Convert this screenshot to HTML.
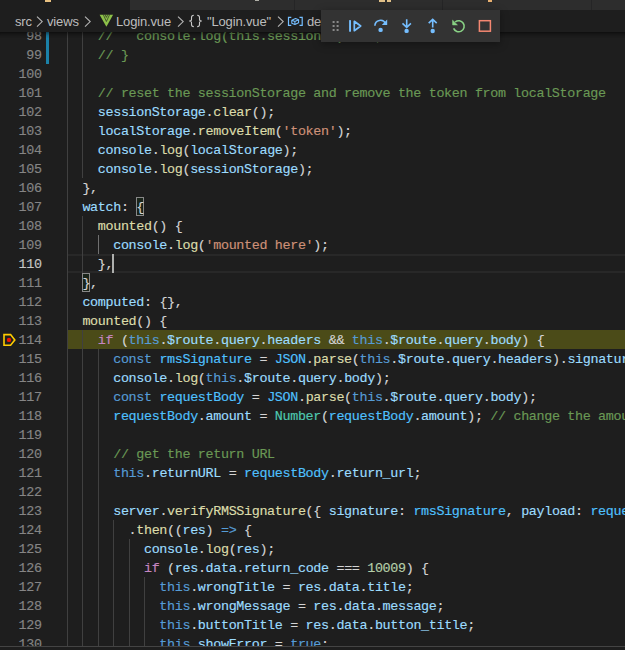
<!DOCTYPE html>
<html><head><meta charset="utf-8">
<style>
html,body{margin:0;padding:0;width:625px;height:650px;overflow:hidden;background:#1e1e1e}
*{box-sizing:border-box}
.a{position:absolute}
#tabs{position:absolute;left:0;top:0;width:625px;height:10px;background:#252526}
.tab{position:absolute;top:0;height:10px;background:#2d2d2d}
#crumbs{position:absolute;left:0;top:10px;width:625px;height:22px;background:#1e1e1e;font-family:"Liberation Sans",sans-serif;font-size:13px;color:#bdbdbd;line-height:22px;letter-spacing:-0.15px}
#crumbs .bt{position:absolute;top:1px;white-space:pre}
#ed{position:absolute;left:0;top:32px;width:625px;height:614px;overflow:hidden}
#in{position:absolute;left:0;top:-32px;width:625px;height:700px}
.row{position:absolute;left:67px;height:19px;line-height:19px;font-family:"Liberation Mono",monospace;font-size:13.4px;letter-spacing:-0.34px;white-space:pre;color:#d4d4d4;padding-top:1px;-webkit-text-stroke:0.15px currentColor}
.ln{position:absolute;left:0;width:41.7px;text-align:right;height:19px;line-height:19px;font-family:"Liberation Mono",monospace;font-size:13.4px;letter-spacing:-0.34px;white-space:pre;color:#858585;padding-top:1px;-webkit-text-stroke:0.15px currentColor}
.ln.act{color:#c6c6c6}
.g{position:absolute;width:1px;background:#404040}
.c{color:#6a9955}.v{color:#9cdcfe}.f{color:#dcdcaa}.s{color:#ce9178}.k{color:#c586c0}.b{color:#569cd6}.n{color:#b5cea8}.t{color:#4ec9b0}.o{color:#4fc1ff}
#shadow{position:absolute;left:0;top:32px;width:625px;height:6px;box-shadow:inset 0 6px 6px -6px #000}
#bottom{position:absolute;left:0;top:646px;width:625px;height:1px;background:#444}
#dbg{position:absolute;left:321px;top:10px;width:179px;height:32px;background:#333333;box-shadow:0 2px 8px rgba(0,0,0,.36)}
</style></head><body>
<div id="tabs">
  <div class="tab" style="left:0;width:130px;background:#1e1e1e"></div>
  <div class="tab" style="left:130px;width:164px"></div>
  <div class="tab" style="left:295px;width:147px"></div>
  <div class="tab" style="left:443px;width:148px"></div>
  <div class="tab" style="left:592px;width:33px"></div>
  <div class="a" style="left:45px;top:0;width:6px;height:1.5px;background:#e8c080"></div>
  <div class="a" style="left:255px;top:0;width:4px;height:1.2px;background:#b0b0a8"></div>
  <div class="a" style="left:379px;top:0;width:6px;height:1.5px;background:#e0c088"></div>
  <div class="a" style="left:387px;top:0;width:4px;height:1.5px;background:#e0c088"></div>
  <div class="a" style="left:488px;top:0;width:3.5px;height:1.5px;background:#e8b070"></div>
</div>
<div id="crumbs">
  <span class="bt" style="left:15px">src</span>
  <svg class="a" style="left:36px;top:6px" width="8" height="11" viewBox="0 0 8 11"><path d="M1 0.6 L6.2 5.6 L1 10.6" fill="none" stroke="#b4b4b4" stroke-width="1.1"/></svg>
  <span class="bt" style="left:47px">views</span>
  <svg class="a" style="left:84px;top:6px" width="8" height="11" viewBox="0 0 8 11"><path d="M1 0.6 L6.2 5.6 L1 10.6" fill="none" stroke="#b4b4b4" stroke-width="1.1"/></svg>
  <svg class="a" style="left:95px;top:2px" width="22" height="18" viewBox="0 0 22 18"><path d="M4.6 2.8 H18.1 L11.4 14.8 Z" fill="#8dc149"/><path d="M8.3 2.6 L11.4 9.5 L14.6 2.6 M10.1 2.6 L11.4 5.4 L12.7 2.6" fill="none" stroke="#1e1e1e" stroke-opacity="0.8" stroke-width="0.8"/></svg>
  <span class="bt" style="left:116px">Login.vue</span>
  <svg class="a" style="left:177px;top:6px" width="8" height="11" viewBox="0 0 8 11"><path d="M1 0.6 L6.2 5.6 L1 10.6" fill="none" stroke="#b4b4b4" stroke-width="1.1"/></svg>
  <svg class="a" style="left:186px;top:2px" width="20" height="18" viewBox="0 0 20 18"><path d="M7.8 3.3 C6 3.3 5.5 4 5.5 5.5 V7.5 C5.5 8.5 4.7 9 3.2 9 C4.7 9 5.5 9.5 5.5 10.5 V12.5 C5.5 14 6 14.6 7.8 14.6 M11.2 3.3 C13 3.3 13.5 4 13.5 5.5 V7.5 C13.5 8.5 14.3 9 15.8 9 C14.3 9 13.5 9.5 13.5 10.5 V12.5 C13.5 14 13 14.6 11.2 14.6" fill="none" stroke="#c8c8c8" stroke-width="1.1"/></svg>
  <span class="bt" style="left:207px">"Login.vue"</span>
  <svg class="a" style="left:277px;top:6px" width="8" height="11" viewBox="0 0 8 11"><path d="M1 0.6 L6.2 5.6 L1 10.6" fill="none" stroke="#b4b4b4" stroke-width="1.1"/></svg>
  <svg class="a" style="left:285px;top:2px" width="20" height="18" viewBox="0 0 20 18"><path d="M6.3 5.3 H3.5 V13.3 H6.3 M14.5 5.3 H17.2 V13.3 H14.5" fill="none" stroke="#75beff" stroke-width="1.2"/><path d="M6.8 8.2 L10.5 6.5 L13.6 7.8 V10.8 L9.9 12.5 L6.8 11.2 Z M6.8 8.2 L9.9 9.5 L13.6 7.8 M9.9 9.5 V12.5" fill="none" stroke="#75beff" stroke-width="1.1" stroke-linejoin="round"/></svg>
  <span class="bt" style="left:307px">de</span>
</div>
<div id="ed"><div id="in">
  <!-- stack frame highlight -->
  <div class="a" style="left:67px;top:330px;width:558px;height:19px;background:rgba(255,255,0,0.2)"></div>
  <!-- current line -->
  <div class="a" style="left:67px;top:254px;width:558px;height:19px;border-top:2px solid #282828;border-bottom:2px solid #282828"></div>
<div class="g" style="left:67px;top:26px;height:627px"></div>
<div class="g" style="left:82px;top:26px;height:152px"></div>
<div class="g" style="left:82px;top:216px;height:57px"></div>
<div class="g" style="left:82px;top:330px;height:323px"></div>
<div class="g" style="left:98px;top:235px;height:19px"></div>
<div class="g" style="left:98px;top:349px;height:304px"></div>
<div class="g" style="left:113px;top:520px;height:133px"></div>
<div class="g" style="left:129px;top:539px;height:114px"></div>
<div class="g" style="left:144px;top:577px;height:76px"></div>
  <div class="g" style="left:98px;top:235px;height:19px;background:#707070"></div>
  <!-- bracket match -->
  <div class="a" style="left:136px;top:197px;width:8px;height:19px;border:1px solid #888;background:rgba(0,100,0,0.1)"></div>
  <div class="a" style="left:82px;top:273px;width:8px;height:19px;border:1px solid #888;background:rgba(0,100,0,0.1)"></div>
<div class="ln" style="top:26px">98</div>
<div class="ln" style="top:45px">99</div>
<div class="ln" style="top:64px">100</div>
<div class="ln" style="top:83px">101</div>
<div class="ln" style="top:102px">102</div>
<div class="ln" style="top:121px">103</div>
<div class="ln" style="top:140px">104</div>
<div class="ln" style="top:159px">105</div>
<div class="ln" style="top:178px">106</div>
<div class="ln" style="top:197px">107</div>
<div class="ln" style="top:216px">108</div>
<div class="ln" style="top:235px">109</div>
<div class="ln act" style="top:254px">110</div>
<div class="ln" style="top:273px">111</div>
<div class="ln" style="top:292px">112</div>
<div class="ln" style="top:311px">113</div>
<div class="ln" style="top:330px">114</div>
<div class="ln" style="top:349px">115</div>
<div class="ln" style="top:368px">116</div>
<div class="ln" style="top:387px">117</div>
<div class="ln" style="top:406px">118</div>
<div class="ln" style="top:425px">119</div>
<div class="ln" style="top:444px">120</div>
<div class="ln" style="top:463px">121</div>
<div class="ln" style="top:482px">122</div>
<div class="ln" style="top:501px">123</div>
<div class="ln" style="top:520px">124</div>
<div class="ln" style="top:539px">125</div>
<div class="ln" style="top:558px">126</div>
<div class="ln" style="top:577px">127</div>
<div class="ln" style="top:596px">128</div>
<div class="ln" style="top:615px">129</div>
<div class="ln" style="top:634px">130</div>
<div class="row" style="top:26px">    <span class="c">//   console.log(this.sessionId)    ;</span></div>
<div class="row" style="top:45px">    <span class="c">// }</span></div>
<div class="row" style="top:64px"></div>
<div class="row" style="top:83px">    <span class="c">// reset the sessionStorage and remove the token from localStorage</span></div>
<div class="row" style="top:102px">    <span class="v">sessionStorage</span>.<span class="f">clear</span>();</div>
<div class="row" style="top:121px">    <span class="v">localStorage</span>.<span class="f">removeItem</span>(<span class="s">&#x27;token&#x27;</span>);</div>
<div class="row" style="top:140px">    <span class="v">console</span>.<span class="f">log</span>(<span class="v">localStorage</span>);</div>
<div class="row" style="top:159px">    <span class="v">console</span>.<span class="f">log</span>(<span class="v">sessionStorage</span>);</div>
<div class="row" style="top:178px">  },</div>
<div class="row" style="top:197px">  <span class="v">watch</span>: {</div>
<div class="row" style="top:216px">    <span class="f">mounted</span>() {</div>
<div class="row" style="top:235px">      <span class="v">console</span>.<span class="f">log</span>(<span class="s">&#x27;mounted here&#x27;</span>);</div>
<div class="row" style="top:254px">    },</div>
<div class="row" style="top:273px">  },</div>
<div class="row" style="top:292px">  <span class="v">computed</span>: {},</div>
<div class="row" style="top:311px">  <span class="f">mounted</span>() {</div>
<div class="row" style="top:330px">    <span class="k">if</span> (<span class="b">this</span>.<span class="v">$route</span>.<span class="v">query</span>.<span class="v">headers</span> &amp;&amp; <span class="b">this</span>.<span class="v">$route</span>.<span class="v">query</span>.<span class="v">body</span>) {</div>
<div class="row" style="top:349px">      <span class="b">const</span> <span class="o">rmsSignature</span> = <span class="o">JSON</span>.<span class="f">parse</span>(<span class="b">this</span>.<span class="v">$route</span>.<span class="v">query</span>.<span class="v">headers</span>).<span class="v">signature</span>;</div>
<div class="row" style="top:368px">      <span class="v">console</span>.<span class="f">log</span>(<span class="b">this</span>.<span class="v">$route</span>.<span class="v">query</span>.<span class="v">body</span>);</div>
<div class="row" style="top:387px">      <span class="b">const</span> <span class="o">requestBody</span> = <span class="o">JSON</span>.<span class="f">parse</span>(<span class="b">this</span>.<span class="v">$route</span>.<span class="v">query</span>.<span class="v">body</span>);</div>
<div class="row" style="top:406px">      <span class="o">requestBody</span>.<span class="v">amount</span> = <span class="t">Number</span>(<span class="o">requestBody</span>.<span class="v">amount</span>); <span class="c">// change the amount</span></div>
<div class="row" style="top:425px"></div>
<div class="row" style="top:444px">      <span class="c">// get the return URL</span></div>
<div class="row" style="top:463px">      <span class="b">this</span>.<span class="v">returnURL</span> = <span class="o">requestBody</span>.<span class="v">return_url</span>;</div>
<div class="row" style="top:482px"></div>
<div class="row" style="top:501px">      <span class="v">server</span>.<span class="f">verifyRMSSignature</span>({ <span class="v">signature</span>: <span class="o">rmsSignature</span>, <span class="v">payload</span>: <span class="o">requestBody</span> })</div>
<div class="row" style="top:520px">        .<span class="f">then</span>((<span class="v">res</span>) <span class="b">=&gt;</span> {</div>
<div class="row" style="top:539px">          <span class="v">console</span>.<span class="f">log</span>(<span class="v">res</span>);</div>
<div class="row" style="top:558px">          <span class="k">if</span> (<span class="v">res</span>.<span class="v">data</span>.<span class="v">return_code</span> === <span class="n">10009</span>) {</div>
<div class="row" style="top:577px">            <span class="b">this</span>.<span class="v">wrongTitle</span> = <span class="v">res</span>.<span class="v">data</span>.<span class="v">title</span>;</div>
<div class="row" style="top:596px">            <span class="b">this</span>.<span class="v">wrongMessage</span> = <span class="v">res</span>.<span class="v">data</span>.<span class="v">message</span>;</div>
<div class="row" style="top:615px">            <span class="b">this</span>.<span class="v">buttonTitle</span> = <span class="v">res</span>.<span class="v">data</span>.<span class="v">button_title</span>;</div>
<div class="row" style="top:634px">            <span class="b">this</span>.<span class="v">showError</span> = <span class="b">true</span>;</div>
  <!-- cursor -->
  <div class="a" style="left:112px;top:254px;width:2px;height:19px;background:#aeafad"></div>
  <!-- git bar -->
  <div class="a" style="left:46px;top:26px;width:3px;height:38px;background:#1b81a8"></div>
  <!-- breakpoint stack frame icon -->
  <svg class="a" style="left:0;top:330px" width="20" height="20" viewBox="0 0 20 20"><path d="M4 4.6 H10.6 L14.8 9.9 L10.6 15.2 H4 Z" fill="none" stroke="#ffcc00" stroke-width="1.6"/><circle cx="9" cy="9.9" r="2.2" fill="#f01400"/></svg>
</div></div>
<div id="shadow"></div>
<div id="bottom"></div>
<div id="dbg"><svg class="a" style="left:0;top:0" width="179" height="32" viewBox="0 0 179 32">
  <g fill="#8a8a8a"><rect x="11.6" y="11" width="2" height="2"/><rect x="15.6" y="11" width="2" height="2"/><rect x="11.6" y="15" width="2" height="2"/><rect x="15.6" y="15" width="2" height="2"/><rect x="11.6" y="19" width="2" height="2"/><rect x="15.6" y="19" width="2" height="2"/></g>
  <g transform="translate(23,6)"><rect x="5.1" y="4" width="1.9" height="11.8" rx="0.6" fill="#75beff"/><path d="M10.3 5.3 L16.7 10 L10.3 14.7 Z" fill="none" stroke="#75beff" stroke-width="1.7" stroke-linejoin="round"/></g>
  <g transform="translate(49,6)"><path d="M4.9 9.8 A5.6 5.6 0 0 1 15.6 7.6" fill="none" stroke="#75beff" stroke-width="1.6"/><path d="M17.2 3.6 L17.2 9.0 L11.8 9.0 Z" fill="#75beff"/><circle cx="10.6" cy="13.9" r="2.2" fill="#75beff"/></g>
  <g transform="translate(75,6)"><path d="M10.7 3.2 V10.8 M6.5 7.4 L10.7 11.4 L14.9 7.4" fill="none" stroke="#75beff" stroke-width="1.6"/><circle cx="10.6" cy="14.9" r="2.2" fill="#75beff"/></g>
  <g transform="translate(101,6)"><path d="M10.7 11.6 V4 M6.7 7.2 L10.7 3.4 L14.7 7.2" fill="none" stroke="#75beff" stroke-width="1.6"/><circle cx="10.7" cy="15" r="2.2" fill="#75beff"/></g>
  <g transform="translate(127,6)"><path d="M7.2 6.0 A5.5 5.5 0 1 1 5.6 12.4" fill="none" stroke="#89d185" stroke-width="1.6"/><path d="M4.6 4.2 L4.6 8.9 L9.4 8.9 Z" fill="#89d185" stroke="#89d185" stroke-width="0.6" stroke-linejoin="round"/></g>
  <rect x="158.4" y="10.7" width="11" height="10.5" fill="none" stroke="#f48771" stroke-width="1.5"/>
</svg></div>
</body></html>
